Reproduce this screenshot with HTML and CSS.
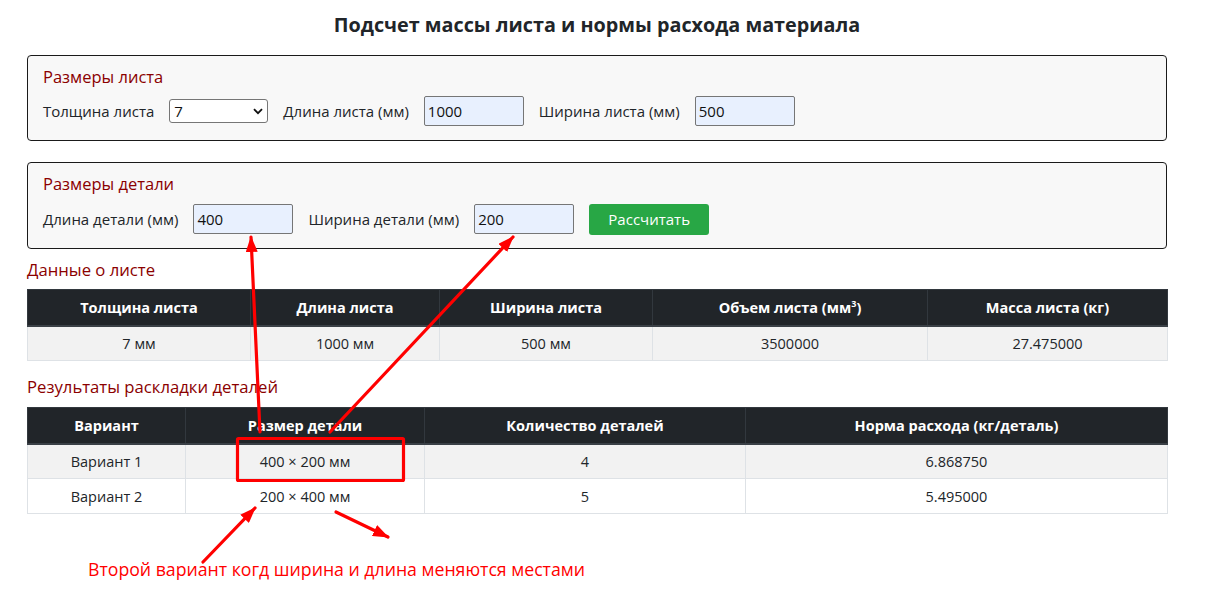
FILE: index.html
```html
<!DOCTYPE html>
<html lang="ru">
<head>
<meta charset="utf-8">
<title>Подсчет массы листа</title>
<link rel="stylesheet" href="styles.css">
</head>
<body>
<div class="page">
  <h1 class="title">Подсчет массы листа и нормы расхода материала</h1>

  <section class="box box-sheet">
    <div class="box-title">Размеры листа</div>
    <div class="row">
      <label class="lbl">Толщина листа</label>
      <div class="select"><span>7</span>
        <svg class="chev" width="10" height="7" viewBox="0 0 10 7"><path d="M1 1.2 L5 5.2 L9 1.2" fill="none" stroke="#111" stroke-width="1.8"/></svg>
      </div>
      <label class="lbl">Длина листа (мм)</label>
      <div class="input">1000</div>
      <label class="lbl">Ширина листа (мм)</label>
      <div class="input">500</div>
    </div>
  </section>

  <section class="box box-part">
    <div class="box-title">Размеры детали</div>
    <div class="row">
      <label class="lbl">Длина детали (мм)</label>
      <div class="input">400</div>
      <label class="lbl">Ширина детали (мм)</label>
      <div class="input">200</div>
      <button class="btn">Рассчитать</button>
    </div>
  </section>

  <h2 class="sub sub-sheet">Данные о листе</h2>
  <table class="tbl">
    <colgroup><col style="width:223px"><col style="width:189px"><col style="width:213px"><col style="width:275px"><col style="width:240px"></colgroup>
    <thead>
      <tr><th>Толщина листа</th><th>Длина листа</th><th>Ширина листа</th><th>Объем листа (мм<sup>3</sup>)</th><th>Масса листа (кг)</th></tr>
    </thead>
    <tbody>
      <tr><td>7 мм</td><td>1000 мм</td><td>500 мм</td><td>3500000</td><td>27.475000</td></tr>
    </tbody>
  </table>

  <h2 class="sub sub-res">Результаты раскладки деталей</h2>
  <table class="tbl">
    <colgroup><col style="width:158px"><col style="width:239px"><col style="width:321px"><col style="width:422px"></colgroup>
    <thead>
      <tr><th>Вариант</th><th>Размер детали</th><th>Количество деталей</th><th>Норма расхода (кг/деталь)</th></tr>
    </thead>
    <tbody>
      <tr><td>Вариант 1</td><td>400 × 200 мм</td><td>4</td><td>6.868750</td></tr>
      <tr><td>Вариант 2</td><td>200 × 400 мм</td><td>5</td><td>5.495000</td></tr>
    </tbody>
  </table>

  <p class="note">Второй вариант когд ширина и длина меняются местами</p>
</div>

<svg class="annot" width="1231" height="604" viewBox="0 0 1231 604">
  <defs>
    <marker id="ah" viewBox="0 0 16 12" refX="15" refY="6" markerWidth="16" markerHeight="12" markerUnits="userSpaceOnUse" orient="auto">
      <path d="M0 0 L16 6 L0 12 Z" fill="#ff0000"/>
    </marker>
  </defs>
  <g stroke="#ff0000" stroke-width="3.2" fill="none" stroke-linecap="round">
    <line x1="260" y1="432" x2="251" y2="237" marker-end="url(#ah)"/>
    <line x1="330" y1="432" x2="513" y2="237" marker-end="url(#ah)"/>
    <line x1="203" y1="562" x2="255" y2="508" marker-end="url(#ah)"/>
    <line x1="336" y1="512" x2="388" y2="537" marker-end="url(#ah)"/>
    <rect x="237.5" y="438.5" width="166" height="42" rx="1"/>
  </g>
</svg>
</body>
</html>
```

FILE: styles.css
```css
* { box-sizing: border-box; }

body {
  margin: 0;
  background: #ffffff;
  font-family: "Open Sans", "Noto Sans", sans-serif;
  font-size: 15px;
  color: #212529;
}

.page {
  width: 1140px;
  margin-left: 27px;
}

.title {
  margin: 0;
  padding-top: 12px;
  height: 55px;
  text-align: center;
  font-size: 19.8px;
  line-height: 26px;
  font-weight: 700;
  color: #212529;
}

.box {
  border: 1px solid #1a1a1a;
  border-radius: 4px;
  background: #f8f8f8;
  padding: 10px 15px 0 15px;
}

.box-sheet { height: 86px; }
.box-part { height: 87px; margin-top: 21px; }

.box-title {
  color: #8b0000;
  font-size: 16.5px;
  line-height: 22px;
}

.row {
  display: flex;
  align-items: center;
  gap: 15px;
  margin-top: 8px;
  height: 30px;
}

.box-part .row { margin-top: 9px; }

.lbl {
  font-size: 15px;
  color: #212529;
}

.select {
  width: 99px;
  height: 24px;
  background: #fff;
  border: 1px solid #767676;
  border-radius: 3px;
  display: flex;
  align-items: center;
  justify-content: space-between;
  padding: 0 4px 0 4px;
  font-size: 15px;
  color: #111;
}

.input {
  width: 100px;
  height: 30px;
  background: #e8f0fe;
  border: 1px solid #767676;
  border-radius: 2px;
  padding: 0 3px;
  display: flex;
  align-items: center;
  font-size: 15px;
  color: #111;
}

.btn {
  width: 120px;
  height: 31px;
  border: none;
  border-radius: 3px;
  background: #28a745;
  color: #fff;
  font-family: inherit;
  font-size: 15px;
}

.sub {
  margin: 0;
  font-weight: 400;
  font-size: 16.7px;
  line-height: 20px;
  color: #8b0000;
}

.sub-sheet { margin-top: 11px; margin-bottom: 9px; }
.sub-res { margin-top: 16px; margin-bottom: 10px; }

.tbl {
  width: 1140px;
  border-collapse: collapse;
  table-layout: fixed;
  font-size: 14.5px;
}

.tbl th {
  background: #212529;
  color: #fff;
  font-weight: 700;
  height: 36px;
  padding: 0 8px;
  text-align: center;
  border: 1px solid #32383e;
  border-bottom: 2px solid #3a4046;
}

.tbl th sup {
  font-size: 9px;
  line-height: 0;
  vertical-align: 6px;
}

.tbl td {
  height: 35px;
  padding: 0 8px;
  text-align: center;
  border: 1px solid #dee2e6;
  color: #212529;
}

.tbl tbody tr:nth-child(odd) td { background: #f2f2f2; }

.note {
  margin: 44px 0 0 61px;
  color: #ff0000;
  font-size: 17.7px;
  line-height: 22px;
}

.annot {
  position: absolute;
  left: 0;
  top: 0;
  pointer-events: none;
}
```
